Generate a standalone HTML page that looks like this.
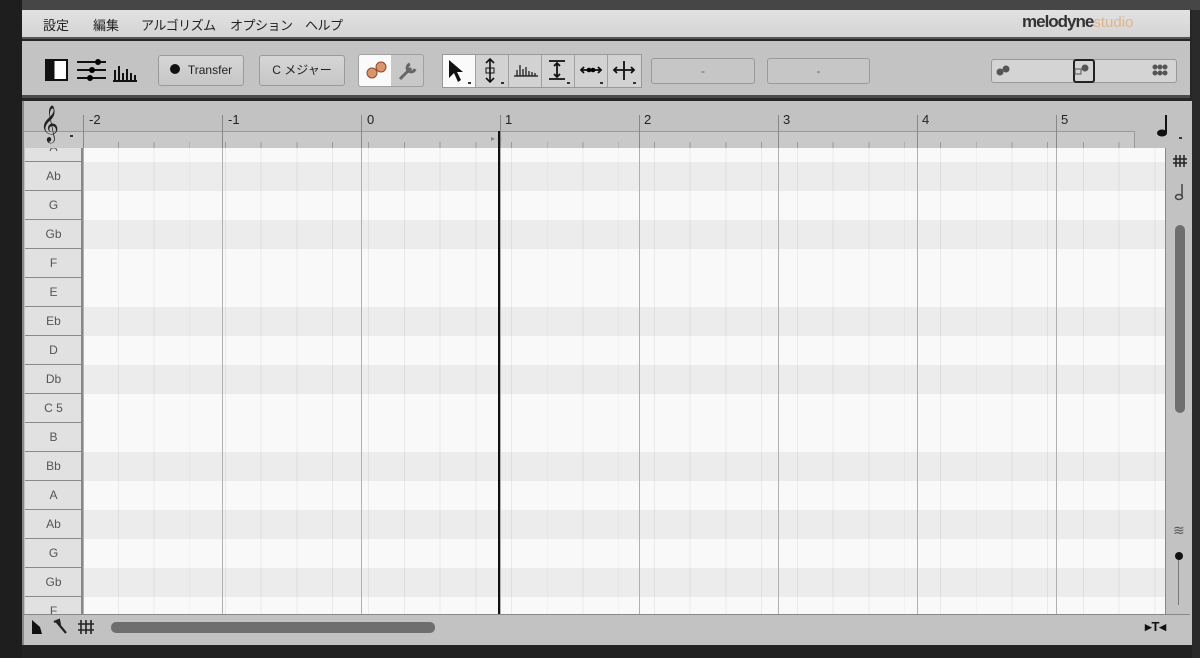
<!DOCTYPE html>
<html><head><meta charset="utf-8"><style>
*{margin:0;padding:0;box-sizing:border-box}
body{width:1200px;height:658px;background:#262626;position:relative;overflow:hidden;font-family:"Liberation Sans","Noto Sans CJK JP",sans-serif}
.a{position:absolute}
.m{position:absolute;top:15px;font-size:13px;color:#222}
.btn{position:absolute;border:1px solid #9a9a9a;border-radius:3px;background:linear-gradient(#d6d6d6,#c6c6c6);font-size:12px;color:#222;text-align:center}
.key{position:absolute;left:25px;width:57px;height:29px;background:#e1e1e1;border-bottom:1px solid #8a8a8a;font-size:12px;color:#555;text-align:center;line-height:28px}
.row{position:absolute;left:83px;width:1082px;height:29px}
.num{position:absolute;top:112px;font-size:13px;color:#222}
.tool{position:absolute;top:55px;height:32px;width:33px;border-right:1px solid #a0a0a0;background:#d2d2d2}
</style></head><body>
<div class="a" style="left:0;top:0;width:1200px;height:10px;background:#464646"></div>
<div class="a" style="left:0;top:0;width:22px;height:658px;background:#1e1e1e"></div>
<!-- menu -->
<div class="a" style="left:22px;top:10px;width:1168px;height:29px;background:linear-gradient(#e2e2e2,#d4d4d4);border-bottom:2px solid #555"></div>
<div class="m" style="left:43px">設定</div>
<div class="m" style="left:93px">編集</div>
<div class="m" style="left:141px;letter-spacing:-0.5px">アルゴリズム</div>
<div class="m" style="left:230px;letter-spacing:-0.5px">オプション</div>
<div class="m" style="left:305px;letter-spacing:-0.5px">ヘルプ</div>
<div class="a" style="left:1022px;top:12px;font-size:17px;font-weight:bold;color:#333;letter-spacing:-1px">melodyne<span style="font-weight:normal;color:#e0b48a;font-size:15px;letter-spacing:0">studio</span></div>
<!-- toolbar -->
<div class="a" style="left:22px;top:41px;width:1168px;height:57px;background:#c3c3c3;border-bottom:3px solid #4a4a4a"></div>
<div class="a" style="left:45px;top:59px;width:23px;height:22px;border:2px solid #111;background:linear-gradient(90deg,#111 40%,#fff 40%)"></div>
<svg class="a" style="left:76px;top:58px" width="32" height="24"><g stroke="#111" stroke-width="2"><line x1="1" y1="4" x2="30" y2="4"/><line x1="1" y1="12" x2="30" y2="12"/><line x1="1" y1="20" x2="30" y2="20"/></g><circle cx="22" cy="4" r="3"/><circle cx="16" cy="12" r="3"/><circle cx="14" cy="20" r="3"/></svg>
<svg class="a" style="left:112px;top:64px" width="26" height="18"><g stroke="#111" stroke-width="2"><line x1="3" y1="17" x2="3" y2="6"/><line x1="7" y1="17" x2="7" y2="2"/><line x1="11" y1="17" x2="11" y2="9"/><line x1="15" y1="17" x2="15" y2="5"/><line x1="19" y1="17" x2="19" y2="9"/><line x1="23" y1="17" x2="23" y2="11"/><line x1="1" y1="17" x2="25" y2="17"/></g></svg>
<div class="btn" style="left:158px;top:55px;width:86px;height:31px;line-height:29px"><span style="display:inline-block;width:10px;height:10px;border-radius:5px;background:#111;margin-right:8px"></span>Transfer</div>
<div class="btn" style="left:259px;top:55px;width:86px;height:31px;line-height:29px">C メジャー</div>
<div class="a" style="left:358px;top:54px;width:66px;height:33px;border:1px solid #a0a0a0;border-radius:3px;background:linear-gradient(90deg,#fafafa 50%,#c8c8c8 50%)"></div>
<svg class="a" style="left:364px;top:58px" width="26" height="24"><circle cx="8" cy="15" r="5" fill="#d9956b" stroke="#8a4a2a"/><circle cx="17" cy="9" r="5" fill="#d9956b" stroke="#8a4a2a"/></svg>
<svg class="a" style="left:396px;top:58px" width="26" height="24"><path d="M4 21 L15 10 M14 6 a4 4 0 1 0 5 5" stroke="#666" stroke-width="3" fill="none"/></svg>
<div class="a" style="left:442px;top:54px;width:200px;height:34px;border:1px solid #999;background:#d2d2d2"></div>
<div class="tool" style="left:443px;background:#fafafa"></div>
<div class="tool" style="left:476px"></div><div class="tool" style="left:509px"></div><div class="tool" style="left:542px"></div><div class="tool" style="left:575px"></div><div class="tool" style="left:608px;border-right:none"></div>
<svg class="a" style="left:447px;top:58px" width="30" height="28"><path d="M2 2 L2 20 L7 15 L11 24 L14 22 L10 14 L16 14 Z" fill="#111"/><rect x="21" y="24" width="3" height="2" fill="#333"/></svg>
<svg class="a" style="left:480px;top:58px" width="30" height="28"><path d="M10 1 L10 24 M6 5 L10 1 L14 5 M6 20 L10 24 L14 20" stroke="#111" stroke-width="1.6" fill="none"/><rect x="6" y="10" width="8" height="5" fill="none" stroke="#111"/><rect x="21" y="24" width="3" height="2" fill="#333"/></svg>
<svg class="a" style="left:513px;top:62px" width="26" height="16"><path d="M1 14 H25 M4 14 V8 M7 14 V3 M10 14 V7 M13 14 V5 M16 14 V9 M19 14 V10 M22 14 V11" stroke="#111" stroke-width="1.2"/></svg>
<svg class="a" style="left:546px;top:58px" width="30" height="28"><path d="M3 3 H19 M3 21 H19 M11 5 V19 M8 8 L11 5 L14 8 M8 16 L11 19 L14 16" stroke="#111" stroke-width="1.8" fill="none"/><rect x="21" y="24" width="3" height="2" fill="#333"/></svg>
<svg class="a" style="left:579px;top:58px" width="30" height="28"><path d="M2 12 H22 M5 9 L2 12 L5 15 M19 9 L22 12 L19 15" stroke="#111" stroke-width="1.8" fill="none"/><circle cx="10" cy="12" r="2.3"/><circle cx="14" cy="12" r="2.3"/><rect x="21" y="24" width="3" height="2" fill="#333"/></svg>
<svg class="a" style="left:612px;top:58px" width="30" height="28"><path d="M12 3 V22 M2 12 H22 M5 9 L2 12 L5 15 M19 9 L22 12 L19 15" stroke="#111" stroke-width="1.8" fill="none"/><rect x="21" y="24" width="3" height="2" fill="#333"/></svg>
<div class="btn" style="left:651px;top:58px;width:104px;height:26px;line-height:24px;background:#c6c6c6;color:#666">-</div>
<div class="btn" style="left:767px;top:58px;width:103px;height:26px;line-height:24px;background:#c6c6c6;color:#666">-</div>
<div class="a" style="left:991px;top:59px;width:186px;height:24px;border:1px solid #999;border-radius:3px;background:#d4d4d4"></div>
<div class="a" style="left:1073px;top:59px;width:22px;height:24px;border:2px solid #222;border-radius:3px"></div>
<svg class="a" style="left:995px;top:62px" width="180" height="18"><circle cx="5" cy="10" r="3.5" fill="#555"/><circle cx="11" cy="7" r="3.5" fill="#555"/><rect x="80" y="7" width="6" height="5" fill="none" stroke="#555"/><circle cx="90" cy="6" r="3.5" fill="#555"/><g fill="#555"><circle cx="160" cy="5" r="2.5"/><circle cx="165" cy="5" r="2.5"/><circle cx="170" cy="5" r="2.5"/><circle cx="160" cy="11" r="2.5"/><circle cx="165" cy="11" r="2.5"/><circle cx="170" cy="11" r="2.5"/></g></svg>
<!-- main panel -->
<div class="a" style="left:22px;top:101px;width:1170px;height:544px;background:#c2c2c2;border-left:2px solid #888"></div>
<div class="a" style="left:24px;top:131px;width:1111px;height:17px;background:#c9c9c9;border-top:1px solid #999;border-right:1px solid #999"></div>
<div class="a" style="left:40px;top:104px;font-size:32px;color:#222;font-family:'DejaVu Serif',serif">𝄞</div>
<div class="a" style="left:70px;top:135px;width:3px;height:2px;background:#333"></div>
<svg class="a" style="left:1156px;top:114px" width="14" height="24"><path d="M10 1 V19" stroke="#111" stroke-width="2"/><ellipse cx="6" cy="19" rx="5" ry="3.5" fill="#111"/></svg>
<div class="a" style="left:1179px;top:137px;width:3px;height:2px;background:#333"></div>
<div class="num" style="left:89px">-2</div><div class="num" style="left:228px">-1</div><div class="num" style="left:367px">0</div><div class="num" style="left:505px">1</div><div class="num" style="left:644px">2</div><div class="num" style="left:783px">3</div><div class="num" style="left:922px">4</div><div class="num" style="left:1061px">5</div>
<div class="a" style="left:83px;top:115px;width:1053px;height:33px;background:repeating-linear-gradient(90deg,#888 0 1px,transparent 1px 139px)"></div>
<div class="a" style="left:83px;top:142px;width:1053px;height:6px;background:repeating-linear-gradient(90deg,transparent 0 34.75px,#999 34.75px 35.75px)"></div>
<div class="a" style="left:491px;top:134px;font-size:8px;color:#888">▸ ◂</div>
<!-- grid -->
<div class="a" style="left:83px;top:148px;width:1082px;height:466px;background:#f9f9f9"></div>
<div class="row" style="top:162px;background:#ececec"></div>
<div class="row" style="top:220px;background:#ececec"></div>
<div class="row" style="top:307px;background:#ececec"></div>
<div class="row" style="top:365px;background:#ececec"></div>
<div class="row" style="top:452px;background:#ececec"></div>
<div class="row" style="top:510px;background:#ececec"></div>
<div class="row" style="top:568px;background:#ececec"></div>
<div class="a" style="left:83px;top:148px;width:1082px;height:466px;background:repeating-linear-gradient(90deg,transparent 0 34.75px,rgba(0,0,0,0.06) 34.75px 35.75px)"></div>
<div class="a" style="left:83px;top:148px;width:1082px;height:466px;background:repeating-linear-gradient(90deg,#b0b0b0 0 1px,transparent 1px 139px)"></div>
<div class="a" style="left:498px;top:131px;width:2px;height:483px;background:#111"></div>
<div class="a" style="left:1165px;top:148px;width:1px;height:466px;background:#888"></div>
<!-- keys -->
<div class="a" style="left:24px;top:148px;width:59px;height:466px;overflow:hidden;border-right:2px solid #888">
<div class="key" style="left:1px;top:-15px">A</div>
<div class="key" style="left:1px;top:14px">Ab</div>
<div class="key" style="left:1px;top:43px">G</div>
<div class="key" style="left:1px;top:72px">Gb</div>
<div class="key" style="left:1px;top:101px">F</div>
<div class="key" style="left:1px;top:130px">E</div>
<div class="key" style="left:1px;top:159px">Eb</div>
<div class="key" style="left:1px;top:188px">D</div>
<div class="key" style="left:1px;top:217px">Db</div>
<div class="key" style="left:1px;top:246px">C 5</div>
<div class="key" style="left:1px;top:275px">B</div>
<div class="key" style="left:1px;top:304px">Bb</div>
<div class="key" style="left:1px;top:333px">A</div>
<div class="key" style="left:1px;top:362px">Ab</div>
<div class="key" style="left:1px;top:391px">G</div>
<div class="key" style="left:1px;top:420px">Gb</div>
<div class="key" style="left:1px;top:449px">F</div>
</div>
<div class="a" style="left:24px;top:614px;width:1166px;height:1px;background:#888"></div>
<!-- right column -->
<svg class="a" style="left:1172px;top:154px" width="16" height="14"><path d="M4 1 V13 M8 1 V13 M12 1 V13 M1 5 H15 M1 9 H15" stroke="#222" stroke-width="1.5"/></svg>
<svg class="a" style="left:1174px;top:183px" width="12" height="18"><path d="M8 1 V14" stroke="#444" stroke-width="1.5"/><ellipse cx="5" cy="14" rx="3.5" ry="2.5" fill="none" stroke="#444" stroke-width="1.5"/></svg>
<div class="a" style="left:1175px;top:225px;width:10px;height:188px;border-radius:5px;background:#6e6e6e"></div>
<div class="a" style="left:1173px;top:522px;font-size:14px;color:#555">≋</div>
<div class="a" style="left:1175px;top:552px;width:8px;height:8px;border-radius:4px;background:#111"></div>
<div class="a" style="left:1178px;top:560px;width:1px;height:45px;background:#777"></div>
<div class="a" style="left:1145px;top:619px;font-size:13px;font-weight:bold;color:#111">▸T◂</div>
<!-- bottom -->
<svg class="a" style="left:30px;top:618px" width="70" height="18"><path d="M2 2 L2 16 L12 16 L10 9 Z" fill="#111"/><path d="M26 3 L36 15 M24 4 L29 2 L30 7" stroke="#222" stroke-width="2.2" fill="none"/><path d="M51 2 V16 M56 2 V16 M61 2 V16 M48 6 H64 M48 12 H64" stroke="#222" stroke-width="1.6"/></svg>
<div class="a" style="left:111px;top:622px;width:324px;height:11px;border-radius:5px;background:#6e6e6e"></div>
<div class="a" style="left:22px;top:645px;width:1178px;height:13px;background:#222"></div>
<div class="a" style="left:1192px;top:10px;width:8px;height:648px;background:#2a2a2a"></div>
</body></html>
